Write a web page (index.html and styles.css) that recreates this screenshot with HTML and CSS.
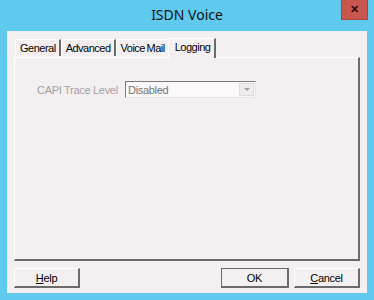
FILE: index.html
```html
<!DOCTYPE html>
<html lang="en">
<head>
    <meta charset="UTF-8">
    <title>ISDN Voice</title>
    <link rel="stylesheet" href="styles.css">
</head>
<body>

<div class="window">
    <div class="titlebar">
        <span class="title">ISDN Voice</span>
        <div class="close">&#x2715;</div>
    </div>

    <div class="client">
        <div class="tabs">
            <div class="tab">General</div>
            <div class="tab">Advanced</div>
            <div class="tab">Voice Mail</div>
            <div class="tab active">Logging</div>
        </div>

        <div class="panel">
            <div class="row">
                <label class="label">CAPI Trace Level</label>
                <div class="combo">
                    <span class="combo-text">Disabled</span>
                    <span class="combo-btn"><span class="arrow"></span></span>
                </div>
            </div>
        </div>

        <div class="buttons">
            <button class="btn"><u>H</u>elp</button>
            <span class="spacer"></span>
            <button class="btn default">OK</button>
            <button class="btn"><u>C</u>ancel</button>
        </div>
    </div>
</div>

</body>
</html>
```

FILE: styles.css
```css
body {
    margin: 0;
    background-color: #5fc9ee;
    font-family: "Liberation Sans", Arial, sans-serif;
    font-size: 11px;
    letter-spacing: -0.3px;
}
.window {
    width: 374px;
    height: 300px;
    display: flex;
    flex-direction: column;
}
.titlebar {
    height: 31px;
    position: relative;
    display: flex;
    justify-content: center;
    align-items: center;
}
.title {
    font-family: "Noto Sans", "Open Sans", sans-serif;
    font-size: 14px;
    letter-spacing: 0;
    color: #111;
    margin-top: -3px;
}
.close {
    position: absolute;
    left: 341px;
    top: 0;
    width: 27px;
    height: 20px;
    background: #c9574f;
    border: 1px solid #a8453e;
    border-top: none;
    box-sizing: border-box;
    color: #2a0a08;
    font-size: 11px;
    font-weight: bold;
    display: flex;
    align-items: center;
    justify-content: center;
}
.client {
    background: #f4f0f2;
    margin: 0 7px;
    height: 262px;
    padding: 7px 7px 0 7px;
    box-sizing: border-box;
    display: flex;
    flex-direction: column;
}
.tabs {
    display: flex;
    align-items: flex-end;
    height: 19px;
    padding-left: 1px;
    letter-spacing: -0.5px;
    word-spacing: -1px;
}
.tab {
    height: 16px;
    padding: 0 3px 0 4px;
    line-height: 16px;
    color: #000;
    border-left: 1px solid #fff;
    border-top: 1px solid #fff;
    border-right: 2px solid #6b6b6b;
    margin-bottom: 1px;
}
.tab.active {
    height: 19px;
    padding: 0 4px 0 6px;
    line-height: 17px;
    margin: 0 -1px -1px -2px;
    background: #f4f0f2;
    position: relative;
    z-index: 1;
}
.panel {
    height: 204px;
    border-top: 1px solid #fff;
    border-left: 1px solid #fff;
    border-right: 2px solid #6b6b6b;
    border-bottom: 2px solid #6b6b6b;
    box-sizing: border-box;
    padding: 23px 0 0 22px;
}
.row {
    display: flex;
    align-items: center;
}
.label {
    color: #a4a0a2;
    width: 88px;
}
.combo {
    width: 131px;
    height: 17px;
    box-sizing: border-box;
    border-top: 1px solid #7a7a7a;
    border-left: 1px solid #7a7a7a;
    border-right: 1px solid #e8e4e6;
    border-bottom: 1px solid #e8e4e6;
    background: #fbf9fa;
    display: flex;
    align-items: center;
    padding-left: 2px;
}
.combo-text {
    flex: 1;
    color: #767274;
}
.combo-btn {
    width: 15px;
    height: 13px;
    margin-right: 1px;
    background: #f0ecee;
    border: 1px solid #e0dcde;
    box-sizing: border-box;
    display: flex;
    align-items: center;
    justify-content: center;
}
.arrow {
    width: 0;
    height: 0;
    border-left: 3px solid transparent;
    border-right: 3px solid transparent;
    border-top: 3px solid #a4a0a2;
}
.buttons {
    display: flex;
    margin-top: 7px;
    gap: 5px;
}
.spacer {
    flex: 1;
}
.btn {
    font-family: "Liberation Sans", Arial, sans-serif;
    font-size: 11px;
    letter-spacing: -0.3px;
    color: #000;
    background: #f4f0f2;
    width: 66px;
    height: 20px;
    padding: 0;
    border-top: 1px solid #fff;
    border-left: 1px solid #fff;
    border-right: 2px solid #6b6b6b;
    border-bottom: 2px solid #6b6b6b;
}
.btn.default {
    border-top: 1px solid #6b6b6b;
    border-left: 1px solid #6b6b6b;
    width: 68px;
}
```
